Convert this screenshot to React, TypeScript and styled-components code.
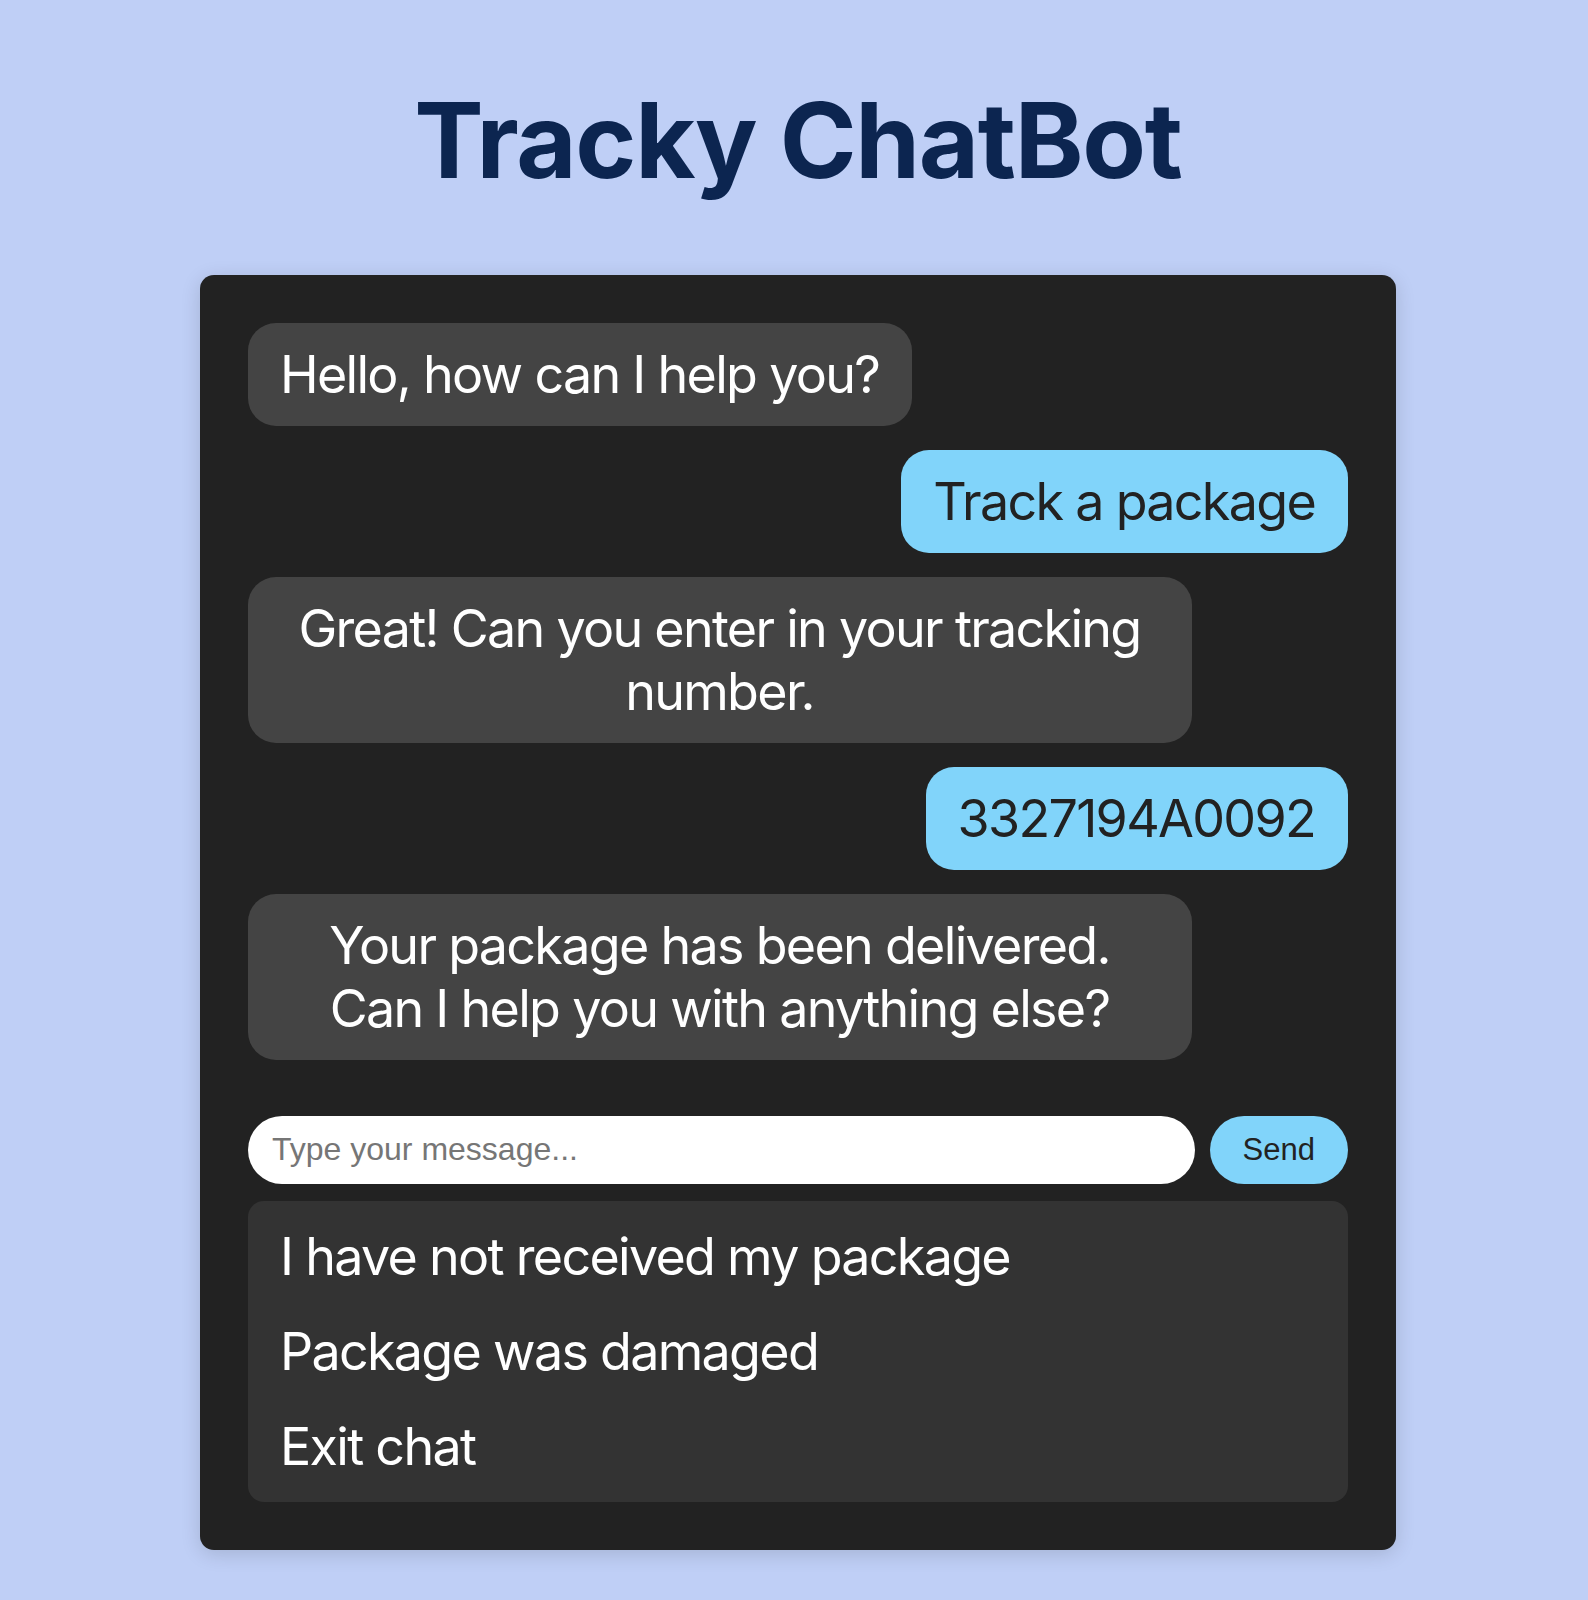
import React from "react";
import styled, { createGlobalStyle } from "styled-components";

const GlobalStyle = createGlobalStyle`
  html, body {
    margin: 0;
    padding: 0;
    background: #bfcff6;
  }
  * { box-sizing: border-box; }
`;

const Page = styled.div`
  min-height: 1600px;
  background: #bfcff6;
  display: flex;
  flex-direction: column;
  align-items: center;
  padding: 78px 0 40px 8px;
  font-family: Inter, "Noto Sans", sans-serif;
`;

const Title = styled.h1`
  margin: 0 0 72px;
  font-family: Inter, "Noto Sans", sans-serif;
  font-weight: 700;
  font-size: 104px;
  line-height: 1.2;
  color: #0c2550;
  letter-spacing: -1.3px;
`;

const Card = styled.div`
  width: 1196px;
  background: #222222;
  border-radius: 14px;
  padding: 48px;
  box-shadow: 0 4px 20px rgba(0, 0, 0, 0.14);
  display: flex;
  flex-direction: column;
`;

const Messages = styled.div`
  display: flex;
  flex-direction: column;
  gap: 24px;
  margin-bottom: 56px;
`;

const Bubble = styled.div<{ $user?: boolean }>`
  align-self: ${(p) => (p.$user ? "flex-end" : "flex-start")};
  max-width: 944px;
  padding: 20px 33px 20px 32px;
  border-radius: 28px;
  background: ${(p) => (p.$user ? "#81d4fa" : "#444444")};
  color: ${(p) => (p.$user ? "#222222" : "#ffffff")};
  font-size: 52px;
  line-height: 63px;
  text-align: center;
  letter-spacing: -1.7px;
`;

const InputRow = styled.div`
  display: flex;
  gap: 15px;
  height: 68px;
  margin-bottom: 17px;
`;

const TextInput = styled.input`
  flex: 1;
  height: 68px;
  border: none;
  outline: none;
  border-radius: 34px;
  background: #ffffff;
  padding: 0 24px;
  font-family: "Liberation Sans", Arial, sans-serif;
  font-size: 32px;
  color: #222;
  &::placeholder {
    color: #767676;
  }
`;

const SendButton = styled.button`
  height: 68px;
  border: none;
  border-radius: 34px;
  background: #81d4fa;
  color: #222222;
  padding: 0 33px;
  font-family: "Liberation Sans", Arial, sans-serif;
  font-size: 31px;
  cursor: pointer;
`;

const Options = styled.div`
  background: #333333;
  border-radius: 16px;
  padding: 8px 32px;
  display: flex;
  flex-direction: column;
`;

const Option = styled.div`
  padding: 16px 0;
  color: #ffffff;
  font-size: 52px;
  line-height: 63px;
  letter-spacing: -1.7px;
  cursor: pointer;
`;

const messages: { text: string; user?: boolean }[] = [
  { text: "Hello, how can I help you?" },
  { text: "Track a package", user: true },
  { text: "Great! Can you enter in your tracking number." },
  { text: "3327194A0092", user: true },
  { text: "Your package has been delivered. Can I help you with anything else?" },
];

const options = ["I have not received my package", "Package was damaged", "Exit chat"];

export default function App() {
  return (
    <>
      <GlobalStyle />
      <Page>
        <Title>Tracky ChatBot</Title>
        <Card>
          <Messages>
            {messages.map((m, i) => (
              <Bubble key={i} $user={m.user}>
                {m.text}
              </Bubble>
            ))}
          </Messages>
          <InputRow>
            <TextInput placeholder="Type your message..." />
            <SendButton>Send</SendButton>
          </InputRow>
          <Options>
            {options.map((o) => (
              <Option key={o}>{o}</Option>
            ))}
          </Options>
        </Card>
      </Page>
    </>
  );
}
